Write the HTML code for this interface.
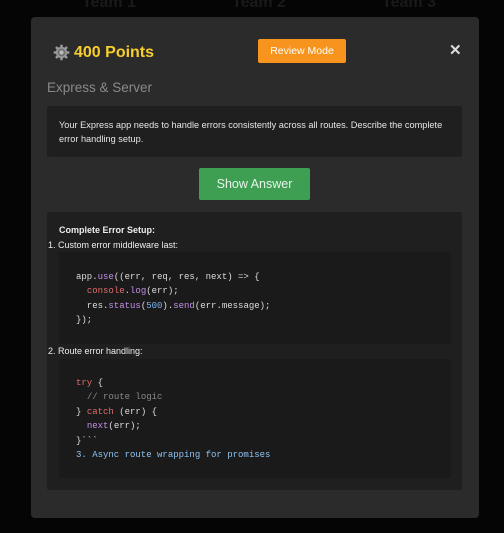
<!DOCTYPE html>
<html><head><meta charset="utf-8"><style>
body{margin:0;width:504px;height:533px;background:#050505;overflow:hidden;font-family:"Liberation Sans",sans-serif;position:relative}
.bgt{position:absolute;top:-6px;color:#1a1a1a;font-weight:bold;font-size:16px}
.modal{position:absolute;left:31px;top:17px;width:448px;height:501px;background:#2b2b2b;border-radius:4px}
.abs{position:absolute}
.pts{left:43px;top:27px;font-size:16px;font-weight:bold;color:#f7cf2d}
.rev{left:227px;top:22px;width:88px;height:24px;background:#f7941d;border-radius:2px;color:#fff;font-size:10.5px;line-height:24px;text-align:center}
.x{left:418px;top:24px;color:#ddd;font-size:15px;font-weight:bold}
.cat{left:16px;top:63px;font-size:13.5px;color:#8a8a8a}
.q{left:16px;top:89px;width:415px;height:51px;background:#1f1f1f;border-radius:2px;box-sizing:border-box;padding:12px 12px;color:#e6e6e6;font-size:9.2px;line-height:14px}
.btn{left:168px;top:151px;width:111px;height:32px;background:#3e9e52;border-radius:2px;color:#e8f4ea;font-size:12.5px;line-height:32px;text-align:center}
.ans{left:16px;top:195px;width:415px;height:278px;background:#1f1f1f;border-radius:2px}
.t{color:#eee;font-size:9px}
.code{background:#1a1a1a;border-radius:2px;font-family:"Liberation Mono",monospace;font-size:9px;line-height:14.4px;color:#ddd;white-space:pre;box-sizing:border-box;padding:0 0 0 17px}
.k{color:#e06c6c}.f{color:#c58fe8}.n{color:#7fb5f2}.c{color:#8a8a8a}.b{color:#8fc3f2}
</style></head><body>
<div class="bgt" style="left:82px">Team 1</div>
<div class="bgt" style="left:232px">Team 2</div>
<div class="bgt" style="left:382px">Team 3</div>
<div class="modal">
 <svg class="abs" style="left:22px;top:27px" width="17" height="17" viewBox="0 0 24 24"><g fill="#9a9a9a"><circle cx="12" cy="12" r="8"/><g stroke="#9a9a9a" stroke-width="3.5"><path d="M12 1v22M1 12h22M4.2 4.2l15.6 15.6M19.8 4.2L4.2 19.8"/></g></g><circle cx="12" cy="12" r="5.5" fill="#6e6e6e"/><circle cx="12" cy="12" r="3" fill="#bbb"/></svg>
 <div class="abs pts">400 Points</div>
 <div class="abs rev">Review Mode</div>
 <div class="abs x">✕</div>
 <div class="abs cat">Express &amp; Server</div>
 <div class="abs q">Your Express app needs to handle errors consistently across all routes. Describe the complete error handling setup.</div>
 <div class="abs btn">Show Answer</div>
 <div class="abs ans">
  <div class="abs t" style="left:12px;top:13px;font-weight:bold">Complete Error Setup:</div>
  <div class="abs t" style="left:1px;top:28px">1. Custom error middleware last:</div>
  <div class="abs code" style="left:12px;top:40px;width:392px;height:92px;padding-top:18px">app.<span class="f">use</span>((err, req, res, next) =&gt; {
  <span class="k">console</span>.<span class="f">log</span>(err);
  res.<span class="f">status</span>(<span class="n">500</span>).<span class="f">send</span>(err.message);
});</div>
  <div class="abs t" style="left:1px;top:134px">2. Route error handling:</div>
  <div class="abs code" style="left:12px;top:147px;width:392px;height:119px;padding-top:17px"><span class="k">try</span> {
  <span class="c">// route logic</span>
} <span class="k">catch</span> (err) {
  <span class="f">next</span>(err);
}&#96;&#96;&#96;
<span class="b">3. Async route wrapping for promises</span></div>
 </div>
</div>
</body></html>
